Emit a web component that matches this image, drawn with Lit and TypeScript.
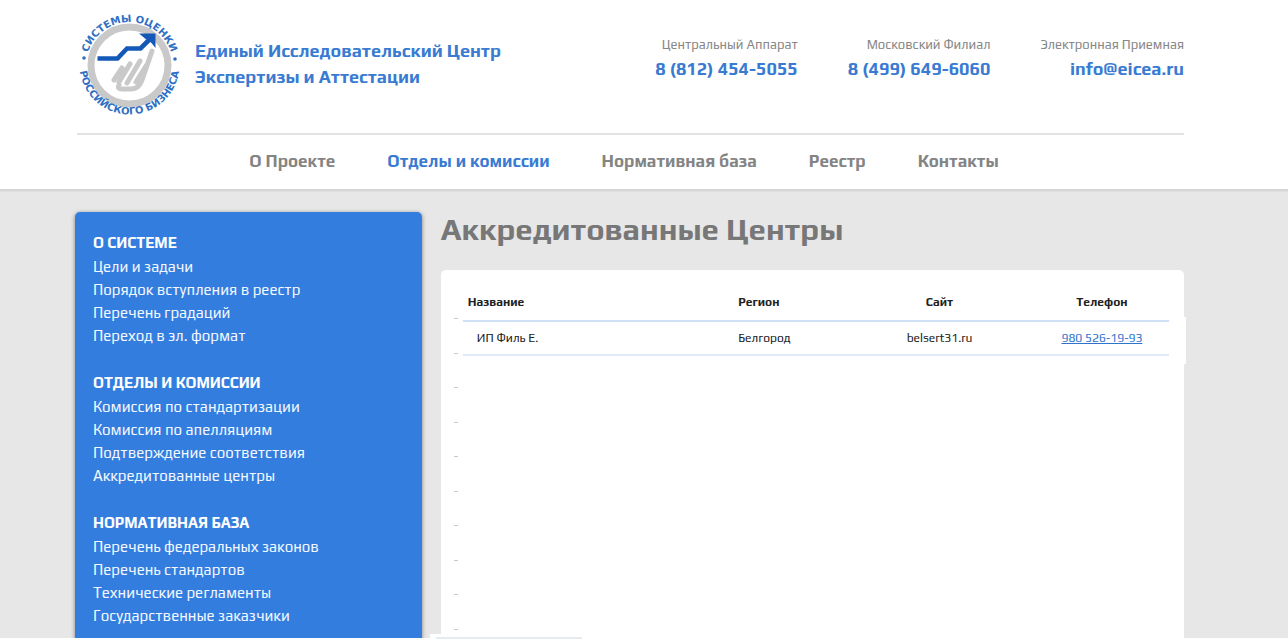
import { LitElement, html, css } from "lit";
import { customElement } from "lit/decorators.js";
import { classMap } from "lit/directives/class-map.js";

const NAV = ["О Проекте", "Отделы и комиссии", "Нормативная база", "Реестр", "Контакты"];
const ACTIVE = "Отделы и комиссии";

const CONTACTS = [
  { label: "Центральный Аппарат", value: "8 (812) 454-5055", href: "tel:+78124545055" },
  { label: "Московский Филиал", value: "8 (499) 649-6060", href: "tel:+74996496060" },
  { label: "Электронная Приемная", value: "info@eicea.ru", href: "mailto:info@eicea.ru" },
];

const SECTIONS = [
  {
    title: "О СИСТЕМЕ",
    links: ["Цели и задачи", "Порядок вступления в реестр", "Перечень градаций", "Переход в эл. формат"],
  },
  {
    title: "ОТДЕЛЫ И КОМИССИИ",
    links: [
      "Комиссия по стандартизации",
      "Комиссия по апелляциям",
      "Подтверждение соответствия",
      "Аккредитованные центры",
    ],
  },
  {
    title: "НОРМАТИВНАЯ БАЗА",
    links: [
      "Перечень федеральных законов",
      "Перечень стандартов",
      "Технические регламенты",
      "Государственные заказчики",
    ],
  },
];

const CENTERS = [{ name: "ИП Филь Е.", region: "Белгород", site: "belsert31.ru", phone: "980 526-19-93" }];

@customElement("site-logo")
export class SiteLogo extends LitElement {
  static styles = css`
    :host {
      display: block;
      flex: none;
      width: 104px;
      height: 104px;
    }
    svg {
      display: block;
      width: 100%;
      height: 100%;
    }
    .ring {
      fill: none;
      stroke: #c9c9c9;
      stroke-width: 7;
    }
    .finger {
      fill: none;
      stroke: #c9c9c9;
      stroke-width: 5;
      stroke-linecap: round;
      stroke-linejoin: round;
    }
    .shaft {
      fill: none;
      stroke: #1459b8;
      stroke-width: 4.6;
    }
    .head {
      fill: #1459b8;
    }
    .dot,
    .motto {
      fill: #2f6fc4;
    }
    .motto {
      font: bold 10px "DejaVu Sans", Verdana, sans-serif;
      text-anchor: middle;
    }
  `;

  render() {
    return html`<svg viewBox="0 0 104 104" role="img" aria-label="Системы оценки российского бизнеса">
      <defs>
        <path id="upper" d="M9 52.500a43.500 43.500 0 0 1 87 0" />
        <path id="lower" d="M2.500 51.500a50 50 0 0 0 100 0" />
      </defs>
      <circle class="ring" cx="52.500" cy="52.500" r="38.500" />
      <path class="finger" d="M45 55l-8 12M53 51L42 69M63 48L50 70M69 53L59 69" />
      <path class="finger" d="M75 38L65 67q-3 9-11 9H45q-5 0-3-4" />
      <path class="shaft" d="M20.500 45.500H40.500L50 35.500H63.500L73 26" />
      <path class="head" d="M62 20.500H78.500V35L74.500 30L68 25.500Z" />
      <circle class="dot" cx="7" cy="45" r="1.800" />
      <circle class="dot" cx="98" cy="46" r="1.800" />
      <text class="motto"><textPath href="#upper" startOffset="50%">СИСТЕМЫ ОЦЕНКИ</textPath></text>
      <text class="motto"><textPath href="#lower" startOffset="50%">РОССИЙСКОГО БИЗНЕСА</textPath></text>
    </svg>`;
  }
}

@customElement("site-header")
export class SiteHeader extends LitElement {
  static styles = css`
    :host {
      display: block;
      background: #fff;
      border-bottom: 1px solid #d4d4d4;
      box-shadow: 0 1px 2px rgba(0, 0, 0, 0.1);
    }
    a {
      color: inherit;
      text-decoration: none;
    }
    .inner {
      margin: 0 104px 0 77px;
    }
    .top {
      display: flex;
      align-items: flex-start;
      padding: 13px 0 16px;
      border-bottom: 2px solid #e2e2e2;
    }
    .brand {
      display: flex;
      gap: 14px;
      color: #397bd2;
      font-size: 18px;
      font-weight: 700;
      line-height: 26px;
    }
    .name {
      padding-top: 25px;
    }
    .contacts {
      display: flex;
      gap: 50px;
      margin: 20px 0 0 auto;
      text-align: right;
      line-height: 24px;
    }
    .contact {
      display: flex;
      flex-direction: column;
    }
    .label {
      color: #888;
      font-size: 13px;
    }
    .value {
      color: #397bd2;
      font-size: 18px;
      font-weight: 700;
    }
    .nav {
      display: flex;
      justify-content: center;
      gap: 52px;
      padding: 14px 13px 16px 0;
      color: #848484;
      font-size: 17px;
      font-weight: 700;
      line-height: 24px;
    }
    .active {
      color: #397bd2;
    }
  `;

  render() {
    return html`<div class="inner">
      <div class="top">
        <a class="brand" href="#">
          <site-logo></site-logo>
          <span class="name">Единый Исследовательский Центр<br />Экспертизы и Аттестации</span>
        </a>
        <div class="contacts">
          ${CONTACTS.map(
            (c) => html`<div class="contact">
              <span class="label">${c.label}</span>
              <a class="value" href=${c.href}>${c.value}</a>
            </div>`
          )}
        </div>
      </div>
      <nav class="nav">
        ${NAV.map((n) => html`<a href="#" class=${classMap({ active: n === ACTIVE })}>${n}</a>`)}
      </nav>
    </div>`;
  }
}

@customElement("side-menu")
export class SideMenu extends LitElement {
  static styles = css`
    :host {
      display: block;
      box-sizing: border-box;
      padding: 19px 18px;
      border-radius: 5px 5px 0 0;
      background: #337ddf;
      box-shadow: 0 1px 4px rgba(0, 0, 0, 0.45);
      color: #fff;
      font-size: 15px;
      line-height: 23px;
    }
    .title {
      margin: 0;
      font-size: 15px;
      line-height: 24px;
    }
    .list {
      margin: 0 0 24px;
      padding: 0;
      list-style: none;
    }
    a {
      color: #f2f7fe;
      text-decoration: none;
    }
  `;

  render() {
    return SECTIONS.map(
      (s) => html`<h2 class="title">${s.title}</h2>
        <ul class="list">
          ${s.links.map((l) => html`<li><a href="#">${l}</a></li>`)}
        </ul>`
    );
  }
}

@customElement("centers-table")
export class CentersTable extends LitElement {
  static styles = css`
    :host {
      display: flex;
      flex-direction: column;
      flex: 1;
      padding: 13px 0 0 13px;
      border-radius: 5px 5px 0 0;
      background: #fff;
      color: #222;
      font-size: 12px;
    }
    .sheet {
      flex: 1;
      padding: 0 15px 0 9px;
      background: repeating-linear-gradient(
          #ccc 0 1px,
          transparent 1px 35px,
          #ccc 35px 36px,
          transparent 36px 69px
        )
        0 35px / 4px 100% no-repeat;
    }
    table {
      width: 100%;
      border-collapse: collapse;
      table-layout: fixed;
    }
    .name {
      width: 39%;
    }
    .region {
      width: 15%;
    }
    .site {
      width: 27%;
    }
    th,
    td {
      box-sizing: border-box;
      padding: 0;
      text-align: center;
    }
    th {
      height: 38px;
      border-bottom: 2px solid #cfe0f4;
    }
    td {
      height: 34px;
      border-bottom: 2px solid #dfe9f8;
    }
    th.name,
    th.region,
    td.region {
      text-align: left;
    }
    th.name {
      padding-left: 5px;
    }
    td.name {
      padding-left: 14px;
      text-align: left;
    }
    tbody {
      box-shadow: 17px 9px #fff, 17px -4px #fff;
    }
    a {
      color: #2f74cc;
    }
  `;

  render() {
    return html`<div class="sheet">
      <table>
        <thead>
          <tr>
            <th class="name">Название</th>
            <th class="region">Регион</th>
            <th class="site">Сайт</th>
            <th>Телефон</th>
          </tr>
        </thead>
        <tbody>
          ${CENTERS.map(
            (c) => html`<tr>
              <td class="name">${c.name}</td>
              <td class="region">${c.region}</td>
              <td class="site">${c.site}</td>
              <td><a href="#">${c.phone}</a></td>
            </tr>`
          )}
        </tbody>
      </table>
    </div>`;
  }
}

@customElement("app-root")
export class AppRoot extends LitElement {
  static styles = css`
    :host {
      display: flex;
      flex-direction: column;
      box-sizing: border-box;
      height: 100vh;
      overflow: hidden;
      border-bottom: 1px solid #fff;
      background: #e7e7e7;
      font-family: Play, Roboto, "Noto Sans", sans-serif;
    }
    .page {
      display: grid;
      grid-template-columns: 7fr 15fr;
      gap: 19px;
      flex: 1;
      min-height: 0;
      margin: 0 104px 0 75px;
      padding-top: 22px;
    }
    main {
      display: flex;
      flex-direction: column;
    }
    h1 {
      margin: 0 0 23px;
      color: #777;
      font-size: 31px;
      line-height: 35px;
    }
    .status {
      position: absolute;
      left: 430px;
      bottom: 0;
      box-sizing: border-box;
      width: 158px;
      height: 5px;
      padding: 3px 6px 0;
      background: #fff;
    }
    .bar {
      display: block;
      height: 2px;
      background: #e6ebf2;
    }
  `;

  render() {
    return html`<site-header></site-header>
      <div class="page">
        <side-menu></side-menu>
        <main>
          <h1>Аккредитованные Центры</h1>
          <centers-table></centers-table>
        </main>
      </div>
      <div class="status"><span class="bar"></span></div>`;
  }
}
